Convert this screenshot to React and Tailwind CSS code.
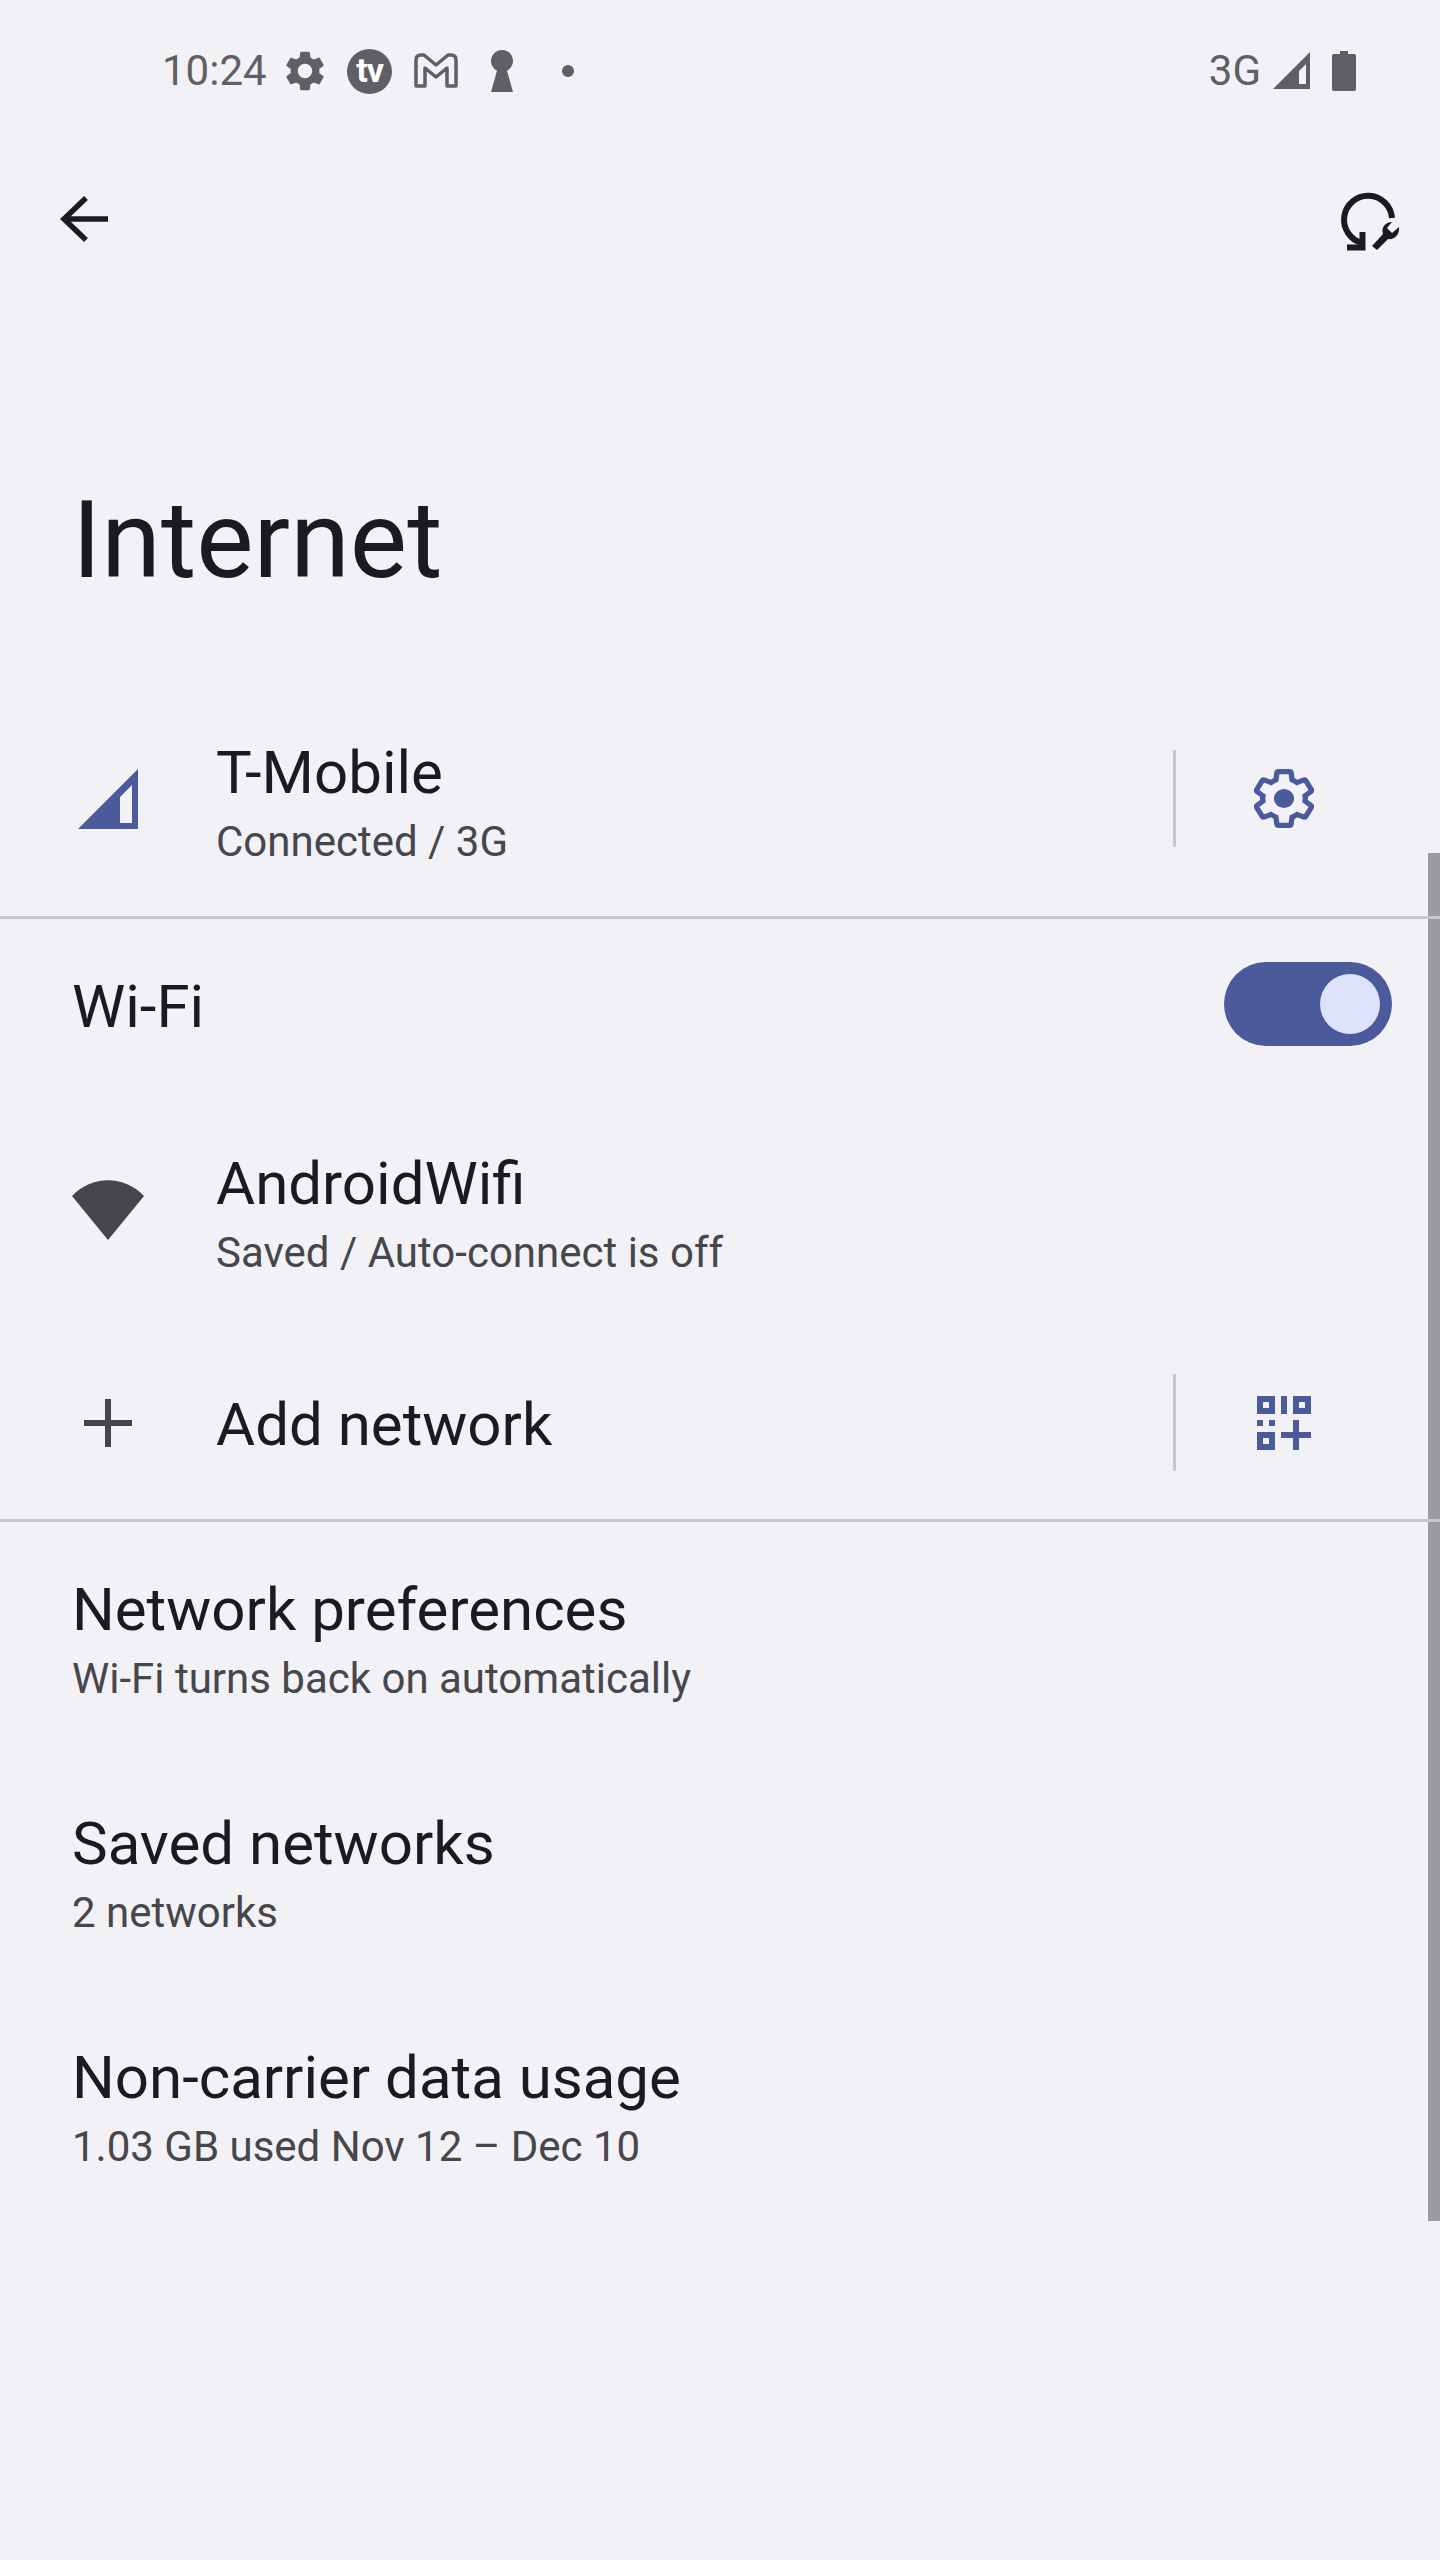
const GEAR = "M19.14 12.94c.04-.3.06-.61.06-.94 0-.32-.02-.64-.07-.94l2.03-1.58c.18-.14.23-.41.12-.61l-1.92-3.32c-.12-.22-.37-.29-.59-.22l-2.39.96c-.5-.38-1.03-.7-1.62-.94l-.36-2.54c-.04-.24-.24-.41-.48-.41h-3.84c-.24 0-.43.17-.47.41l-.36 2.54c-.59.24-1.13.57-1.62.94l-2.39-.96c-.22-.08-.47 0-.59.22L2.74 8.87c-.12.21-.08.47.12.61l2.03 1.58c-.05.3-.09.63-.09.94s.02.64.07.94l-2.03 1.58c-.18.14-.23.41-.12.61l1.92 3.32c.12.22.37.29.59.22l2.39-.96c.5.38 1.03.7 1.62.94l.36 2.54c.05.24.24.41.48.41h3.84c.24 0 .44-.17.47-.41l.36-2.54c.59-.24 1.13-.56 1.62-.94l2.39.96c.22.08.47 0 .59-.22l1.92-3.32c.12-.22.07-.47-.12-.61l-2.01-1.58z";

function StatusLeft() {
  return (
    <div className="flex items-center text-[#5f5f64]">
      <span className="text-[42px] leading-[48px] w-[119px] whitespace-nowrap">10:24</span>
      <svg width="48" height="48" viewBox="0 0 24 24" className="shrink-0" fill="#5f5f64">
        <path fillRule="evenodd" d={GEAR + "M12 15.6c-1.98 0-3.6-1.62-3.6-3.6s1.62-3.6 3.6-3.6 3.6 1.62 3.6 3.6-1.62 3.6-3.6 3.6z"} />
      </svg>
      <div className="ml-[18px] w-[45px] h-[45px] rounded-full bg-[#5f5f64] flex items-center justify-center text-white font-bold text-[34px] leading-none tracking-[-1px] pb-[3px]">tv</div>
      <svg width="44" height="36" viewBox="0 0 44 36" className="ml-[22px]" fill="none" stroke="#5f5f64" strokeWidth="3.5" strokeLinejoin="round">
        <path d="M2 7 Q2 2 7 2 H10 L22 12 L34 2 H37 Q42 2 42 7 V33 H33 V15 L22 24 L11 15 V33 H2 Z" />
      </svg>
      <svg width="24" height="42" viewBox="0 0 24 42" className="ml-[32px]" fill="#5f5f64">
        <path d="M12 0a11 11 0 0 1 5 20.8L23 42H1L7 20.8A11 11 0 0 1 12 0z" />
      </svg>
      <div className="ml-[48px] w-[12px] h-[12px] rounded-full bg-[#5f5f64]" />
    </div>
  );
}

function StatusRight() {
  return (
    <div className="flex items-center text-[#5f5f64]">
      <span className="text-[42px] leading-[48px]">3G</span>
      <svg width="38" height="38" viewBox="0 0 38 38" className="ml-[12px]" fill="#5f5f64">
        <path fillRule="evenodd" d="M37 0V37H0zM33 12 L26 19V32H33z" />
      </svg>
      <svg width="24" height="40" viewBox="0 0 24 40" className="ml-[21px]" fill="#5f5f64">
        <path d="M8 0h8v3h6a2 2 0 0 1 2 2v33a2 2 0 0 1-2 2H2a2 2 0 0 1-2-2V5a2 2 0 0 1 2-2h6z" />
      </svg>
    </div>
  );
}

function Toolbar() {
  return (
    <div className="h-[154px] flex items-center justify-between pl-[57px] pr-[40px]">
      <svg width="52" height="48" viewBox="0 0 52 48" fill="none" stroke="#1b1b1f" strokeWidth="5.5">
        <path d="M51 24H6M29 3 7 24l22 21" />
      </svg>
      <svg width="62" height="64" viewBox="0 0 62 64" className="mt-[4px]" fill="none">
        <path d="M54 29A24 24 0 1 0 24 54" stroke="#1b1b1f" strokeWidth="6" />
        <path d="M24.5 43V58.5H9" stroke="#1b1b1f" strokeWidth="6" />
        <path d="M34 57 L45 45 C43 39 47 33 54 33 L49 39 L54 44 L61 38 C62 46 56 51 50 50 L39 61 Z" fill="#1b1b1f" />
      </svg>
    </div>
  );
}

function Sub({ children }) {
  return <div className="text-[42px] leading-[66px] text-[#46464b]">{children}</div>;
}

function Title({ children }) {
  return <div className="text-[60px] leading-[72px] text-[#1b1b1f]">{children}</div>;
}

function Divider() {
  return <div className="relative z-10 h-[3px] bg-[#c8c8cc]" />;
}

function VLine() {
  return <div className="w-[3px] h-[97px] bg-[#c8c8cc]" />;
}

function Pref({ title, sub }) {
  return (
    <div className="h-[234px] pl-[72px] pt-[8px] flex flex-col justify-center">
      <Title>{title}</Title>
      <Sub>{sub}</Sub>
    </div>
  );
}

export default function App() {
  return (
    <div className="relative w-[1440px] h-[2560px] overflow-hidden bg-[#f1f1f6] font-['Roboto',sans-serif]">
      <div className="h-[142px] flex items-center justify-between pl-[162px] pr-[84px]">
        <StatusLeft />
        <StatusRight />
      </div>
      <Toolbar />

      <div className="h-[429px] pl-[72px] pt-[180px]">
        <div className="text-[108px] leading-[128px] text-[#1b1b1f]">Internet</div>
      </div>

      <div className="h-[191px] flex items-start">
        <div className="w-[216px] pl-[78px] pt-[44px] shrink-0">
          <svg width="60" height="60" viewBox="0 0 60 60" fill="#4a5a9b">
            <path fillRule="evenodd" d="M60 0V60H0zM54 16 L42 28V54H54z" />
          </svg>
        </div>
        <div className="flex-1 pt-[12px]">
          <Title>T-Mobile</Title>
          <Sub>Connected / 3G</Sub>
        </div>
        <div className="pt-[25px]"><VLine /></div>
        <div className="w-[264px] pl-[78px] pt-[43px]">
          <svg width="60" height="61" viewBox="1.85 1.1 20.3 21.8" preserveAspectRatio="none" fill="none" stroke="#4a5a9b" strokeWidth="1.8">
            <path d={GEAR} />
            <circle cx="12" cy="12" r="3.4" fill="#4a5a9b" stroke="none" />
          </svg>
        </div>
      </div>
      <Divider />

      <div className="h-[176px] flex items-center justify-between pl-[72px] pr-[48px]">
        <div className="text-[60px] leading-[72px] text-[#1b1b1f]">Wi-Fi</div>
        <div className="w-[168px] h-[84px] mb-[6px] rounded-full bg-[#4a5a9b] flex items-center justify-end pr-[12px]">
          <div className="w-[60px] h-[60px] rounded-full bg-[#dde1f9]" />
        </div>
      </div>

      <div className="h-[234px] flex items-start">
        <div className="w-[216px] pl-[72px] pt-[85px] shrink-0">
          <svg width="72" height="60" viewBox="0 0 72 60" fill="#45454b">
            <path d="M0 16 C20 -5 52 -5 72 16 L36 60 Z" />
          </svg>
        </div>
        <div className="pt-[53px]">
          <Title>AndroidWifi</Title>
          <Sub>Saved / Auto-connect is off</Sub>
        </div>
      </div>

      <div className="h-[190px] flex items-start">
        <div className="w-[216px] pl-[84px] pt-[70px] shrink-0">
          <svg width="48" height="48" viewBox="0 0 48 48" fill="#45454b">
            <path d="M21 0h6v21h21v6H27v21h-6V27H0v-6h21z" />
          </svg>
        </div>
        <div className="flex-1 pt-[60px]">
          <Title>Add network</Title>
        </div>
        <div className="pt-[45px]"><VLine /></div>
        <div className="w-[264px] pl-[81px] pt-[67px]">
          <svg width="54" height="54" viewBox="0 0 54 54" fill="#4a5a9b">
            <path fillRule="evenodd" d="M0 0h18v18H0zM6 6v6h6V6z" />
            <path d="M24 0h6v18h-6z" />
            <path fillRule="evenodd" d="M36 0h18v18H36zM42 6v6h6V6z" />
            <path d="M0 24h6v6H0zM12 24h6v6h-6z" />
            <path fillRule="evenodd" d="M0 36h18v18H0zM6 42v6h6v-6z" />
            <path d="M36 24h6v12h12v6H42v12h-6V42H24v-6h12z" />
          </svg>
        </div>
      </div>
      <Divider />

      <Pref title="Network preferences" sub="Wi-Fi turns back on automatically" />
      <Pref title="Saved networks" sub="2 networks" />
      <Pref title="Non-carrier data usage" sub="1.03 GB used Nov 12 – Dec 10" />

      <div className="absolute right-0 top-[853px] w-[12px] h-[1368px] bg-[#9b9a9f]" />
    </div>
  );
}
